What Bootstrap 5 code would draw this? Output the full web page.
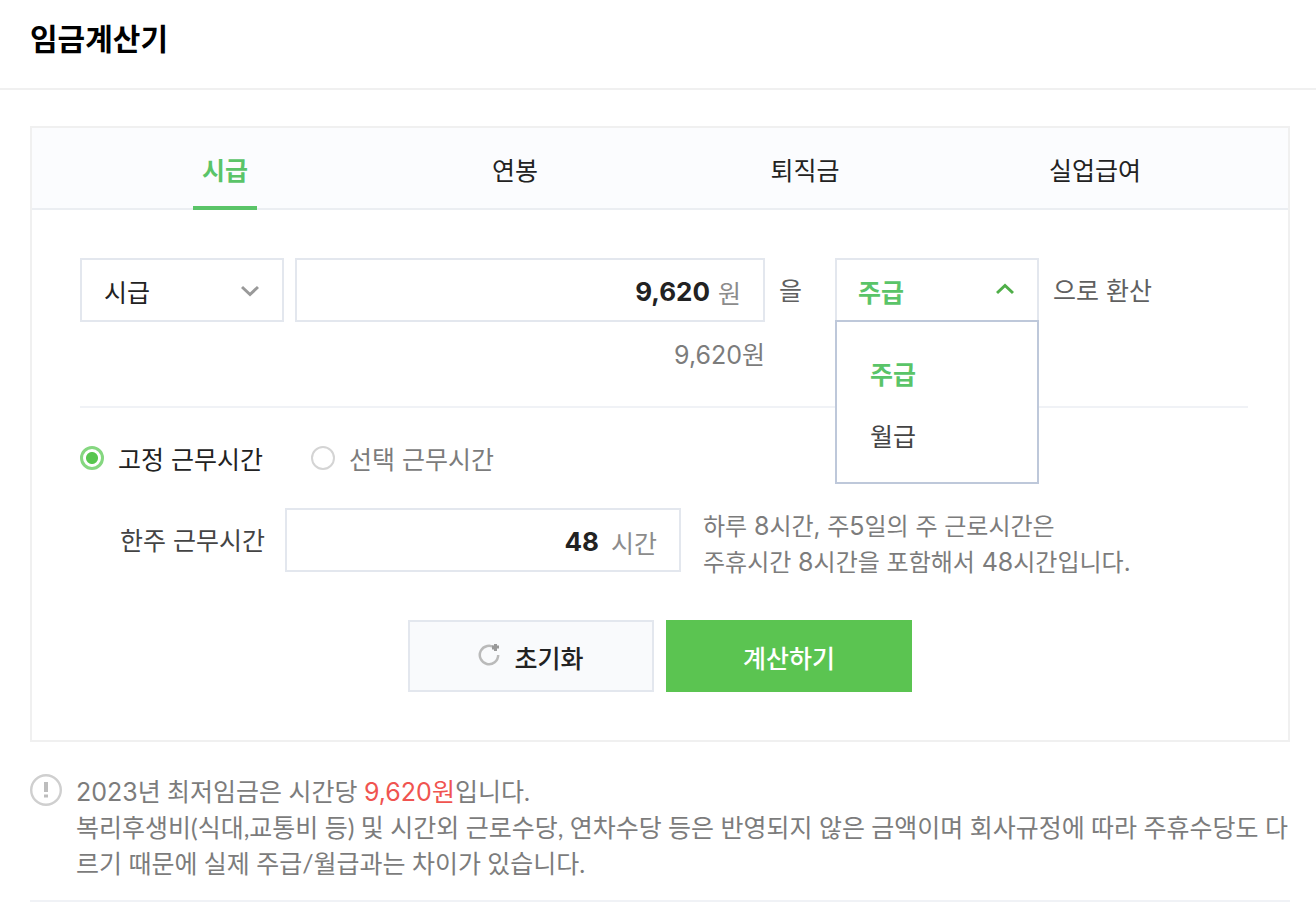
<!DOCTYPE html>
<html lang="ko">
<head>
<meta charset="utf-8">
<meta name="viewport" content="width=device-width, initial-scale=1">
<title>임금계산기</title>
<link href="https://cdn.jsdelivr.net/npm/bootstrap@5.3.0/dist/css/bootstrap.min.css" rel="stylesheet">
<style>
:root { --green: #5bc451; --green-text: #5ac468; --line: #e3e7ee; --soft: #f0f0f0; --ink: #222; --muted: #7c7c7c; }
body { font-family: "Noto Sans CJK KR", sans-serif; font-size: 25px; line-height: 36px; color: var(--muted); background: #fff; }
.num { font-family: Inter, sans-serif; font-size: 25px; line-height: 1; }
.page-head { border-bottom: 2px solid var(--soft); padding: 15px 30px 29px; }
.page-head h1 { font-size: 30px; line-height: 44px; font-weight: 700; color: #000; }
.page-main { padding: 36px 26px 0 30px; }
.calc { border: 2px solid var(--soft); border-radius: 0; }
.calc-tabs { background: #fbfcfe; border-bottom: 2px solid #ebeef2; padding: 0 48px; }
.calc-tabs .nav-item { margin-bottom: -2px; }
.calc-tabs .nav-link { padding: 0; color: var(--ink); }
.calc-tabs .nav-link span { display: inline-block; padding: 23px 9px 19px; border-bottom: 4px solid transparent; vertical-align: top; }
.calc-tabs .nav-link.active { color: var(--green-text); font-weight: 700; }
.calc-tabs .nav-link.active span { border-color: var(--green-text); }
.calc-body { padding: 48px 40px 48px 48px; }
.convert { height: 64px; }
.pick { width: 204px; flex: none; }
.pick select { appearance: none; display: block; width: 100%; height: 64px; border: 2px solid var(--line); background: #fff; color: var(--ink); padding: 2px 22px 0; font: inherit; line-height: 36px; outline: 0; }
.pick.open select { color: var(--green-text); font-weight: 700; padding-left: 21px; }
.pick svg { position: absolute; right: 25px; top: 27px; pointer-events: none; }
.pick.open svg { top: 25px; }
.pick-menu { position: absolute; top: 62px; left: 0; right: 0; z-index: 2; background: #fff; border: 2px solid #bec8da; padding: 20px 0 16px; }
.pick-menu button { display: block; width: 100%; height: 62px; border: 0; background: none; text-align: left; padding: 0 33px; color: #444; }
.pick-menu button.active { color: var(--green-text); font-weight: 700; }
.particle { color: #606060; padding-bottom: 2px; }
.to { margin-left: 14px; }
.from { margin: 0 33px 0 14px; }
.field { border: 2px solid var(--line); height: 64px; padding: 0 22px; color: #8c8c8c; }
.field input { font: 700 26px/36px Inter, sans-serif; color: var(--ink); border: 0; outline: 0; min-width: 0; background: none; text-align: right; padding: 4px 0 0; }
.field label { padding-top: 4px; }
.amount { flex: 0 1 470px; min-width: 200px; margin-left: 11px; }
.hours { flex: 0 1 396px; min-width: 180px; }
.echo { max-width: 685px; margin-top: 13px; }
.rule { border-top: 2px solid #f0f2f6; margin-top: 35px; }
.work { margin-top: 30px; gap: 48px; }
.work input { appearance: none; width: 24px; height: 24px; margin: 0 14px 0 0; border: 2px solid #d4d4d4; border-radius: 50%; background: #fff; flex: none; }
.work input:checked { border: 3px solid #85d780; background: radial-gradient(circle, #57c64e 0 5.5px, #fff 6.5px); }
.work label { height: 40px; padding-top: 2px; }
.dark { color: var(--ink); }
.week { margin-top: 21px; padding-left: 40px; }
.week-label { color: #444; margin-right: 20px; padding-bottom: 3px; }
.hours-unit { padding-left: 12px; }
.week-help { font-family: Inter, "Noto Sans CJK KR", sans-serif; font-size: 24px; margin: 0 0 0 22px; padding-top: 10px; }
.actions { gap: 12px; margin: 39px 8px 0 0; }
.act { width: 246px; height: 72px; border-radius: 0; font-size: 25px; line-height: 36px; padding: 2px 0 0; font-weight: 500; }
.act-reset { gap: 14px; }
.act-reset, .act-reset:hover { border: 2px solid var(--line); background: #f9fafc; color: var(--ink); }
.act-go, .act-go:hover { background: var(--green); border: 0; color: #fff; }
.note { margin-top: 31px; padding-bottom: 19px; border-bottom: 2px solid #f0f2f6; }
.note p { font-family: Lato, "Noto Sans CJK KR", sans-serif; word-break: break-all; padding-left: 14px; }
.note b { color: #f05450; font-weight: 400; }
</style>
</head>
<body>
<header class="page-head"><h1 class="m-0">임금계산기</h1></header>
<main class="page-main">
  <form class="calc" onsubmit="return false">
    <ul class="nav nav-justified calc-tabs">
      <li class="nav-item"><a class="nav-link active" href="#" aria-current="page"><span>시급</span></a></li>
      <li class="nav-item"><a class="nav-link" href="#"><span>연봉</span></a></li>
      <li class="nav-item"><a class="nav-link" href="#"><span>퇴직금</span></a></li>
      <li class="nav-item"><a class="nav-link" href="#"><span>실업급여</span></a></li>
    </ul>
    <div class="calc-body">
      <div class="convert d-flex align-items-center">
        <div class="pick position-relative">
          <select aria-label="입력 기준"><option>시급</option><option>연봉</option></select>
          <svg width="18" height="12" viewBox="0 0 18 12" fill="none" stroke="#999" stroke-width="3"><path d="M1 2l8 7.500L17 2"/></svg>
        </div>
        <div class="field amount d-flex align-items-center">
          <input class="flex-grow-1" id="amount" type="text" inputmode="numeric" value="9,620">
          <label class="ps-2 flex-shrink-0" for="amount">원</label>
        </div>
        <span class="text-nowrap particle from">을</span>
        <div class="pick open position-relative">
          <select aria-label="환산 기준"><option>주급</option><option>월급</option></select>
          <svg width="18" height="12" viewBox="0 0 18 12" fill="none" stroke="#4fae48" stroke-width="3"><path d="M1 10l8-7.500L17 10"/></svg>
          <div class="pick-menu">
            <button type="button" class="active">주급</button>
            <button type="button">월급</button>
          </div>
        </div>
        <span class="text-nowrap particle to">으로 환산</span>
      </div>
      <div class="echo text-end"><span class="num">9,620</span>원</div>
      <div class="rule"></div>
      <div class="work d-flex">
        <div class="d-flex align-items-center"><input type="radio" name="work" id="fixed" checked><label class="dark" for="fixed">고정 근무시간</label></div>
        <div class="d-flex align-items-center"><input type="radio" name="work" id="flex"><label for="flex">선택 근무시간</label></div>
      </div>
      <div class="week d-flex align-items-center">
        <label class="week-label text-nowrap" for="hours">한주 근무시간</label>
        <div class="field hours d-flex align-items-center">
          <input class="flex-grow-1" id="hours" type="text" inputmode="numeric" value="48">
          <label class="flex-shrink-0 hours-unit" for="hours">시간</label>
        </div>
        <p class="week-help">하루 <span class="num">8</span>시간, 주<span class="num">5</span>일의 주 근로시간은<br>주휴시간 <span class="num">8</span>시간을 포함해서 <span class="num">48</span>시간입니다.</p>
      </div>
      <div class="d-flex justify-content-center actions">
        <button type="reset" class="btn act act-reset d-flex align-items-center justify-content-center"><svg class="mb-1" width="22" height="24" viewBox="0 0 22 24" fill="none"><path d="M17 5A9.200 9.200 0 1 0 20.200 12" stroke="#bababa" stroke-width="2.500"/><path d="M14 2.500h2V1h3v1.500h2v3h-2V8h-3V6.500h-2z" fill="#999"/></svg>초기화</button>
        <button type="submit" class="btn act act-go">계산하기</button>
      </div>
    </div>
  </form>
  <div class="note d-flex">
    <svg class="flex-shrink-0" width="32" height="34" viewBox="0 0 32 34" fill="none"><circle cx="16" cy="17" r="14.800" stroke="#cfcfcf" stroke-width="2.400"/><path d="M16 9v10M16 21.500v3" stroke="#bdbdbd" stroke-width="4"/></svg>
    <p class="m-0"><span class="num">2023</span>년 최저임금은 시간당 <b><span class="num">9,620</span>원</b>입니다.<br>복리후생비(식대,교통비 등) 및 시간외 근로수당, 연차수당 등은 반영되지 않은 금액이며 회사규정에 따라 주휴수당도 다르기 때문에 실제 주급/월급과는 차이가 있습니다.</p>
  </div>
</main>
<script src="https://cdn.jsdelivr.net/npm/bootstrap@5.3.0/dist/js/bootstrap.bundle.min.js"></script>
</body>
</html>
